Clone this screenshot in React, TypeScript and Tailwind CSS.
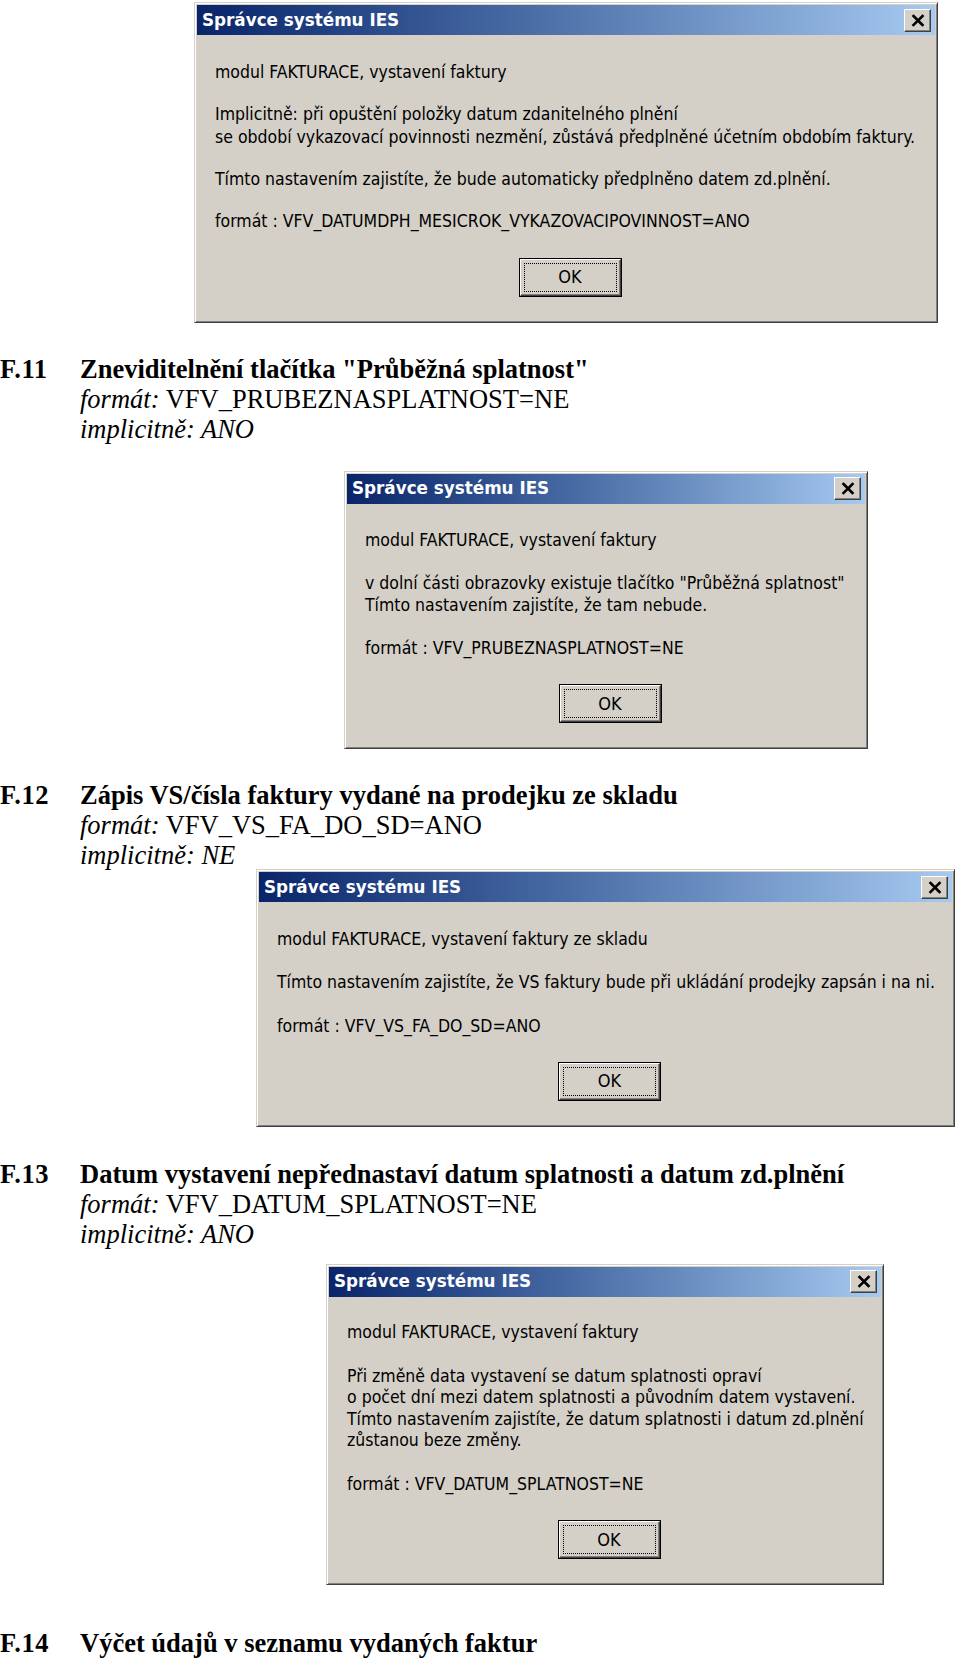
import React from "react";

type DialogProps = {
  className: string;
  textClass: string;
  paragraphs: string[][];
};

const TITLE = "Správce systému IES";

function CloseButton() {
  return (
    <div className="flex h-[23px] w-[27px] items-center justify-center border border-t-[#ffffff] border-l-[#ffffff] border-b-[#404040] border-r-[#404040] bg-[#d4d0c8] shadow-[inset_-1px_-1px_0_#808080]">
      <svg width="14" height="13" viewBox="0 0 14 13" aria-hidden="true">
        <path d="M2.5 2 L11.5 11 M11.5 2 L2.5 11" stroke="#000" strokeWidth="2.6" strokeLinecap="square" />
      </svg>
    </div>
  );
}

function OkButton() {
  return (
    <div className="mx-auto flex h-[39px] w-[103px] border border-black">
      <div className="flex flex-1 border border-t-[#ffffff] border-l-[#ffffff] border-b-[#404040] border-r-[#404040] bg-[#d4d0c8] p-[3px] shadow-[inset_-1px_-1px_0_#808080]">
        <div className="flex flex-1 items-center justify-center border border-dotted border-[#000]">
          <span className="font-['DejaVu_Sans_Condensed','DejaVu_Sans',sans-serif] text-[18px] leading-none text-black">OK</span>
        </div>
      </div>
    </div>
  );
}

function Dialog({ className, textClass, paragraphs }: DialogProps) {
  return (
    <div
      className={`border border-t-[#d4d0c8] border-l-[#d4d0c8] border-b-[#404040] border-r-[#404040] bg-[#d4d0c8] p-[2px] shadow-[inset_1px_1px_0_#ffffff,inset_-1px_-1px_0_#808080] ${className}`}
    >
      <div className="flex h-[30px] items-center justify-between bg-gradient-to-r from-[#0a246a] to-[#a6caf0] pl-[5px] pr-[4px]">
        <span className="font-['DejaVu_Sans',sans-serif] text-[16.8px] font-bold leading-none text-white">
          {TITLE}
        </span>
        <CloseButton />
      </div>
      <div className="flex flex-col pl-[18px] pr-[10px] pt-[25.5px] pb-[23px]">
        <div
          className={`flex flex-col font-['DejaVu_Sans_Condensed','DejaVu_Sans',sans-serif] text-[17.5px] text-black ${textClass}`}
        >
          {paragraphs.map((lines, i) => (
            <p key={i} className="whitespace-nowrap">
              {lines.map((line, j) => (
                <span key={j} className="block">
                  {line}
                </span>
              ))}
            </p>
          ))}
        </div>
        <div className="mt-[25px]">
          <OkButton />
        </div>
      </div>
    </div>
  );
}

function Heading({ num, title, format, implicit }: { num: string; title: string; format: string; implicit: string }) {
  return (
    <div className="grid grid-cols-[80px_1fr] font-['Liberation_Serif','Times_New_Roman',serif] text-[26.5px] leading-[30px] text-black">
      <div className="font-bold tracking-[0.5px]">{num}</div>
      <div className="flex flex-col">
        <div className="font-bold">{title}</div>
        {format && (
          <div>
            <i>formát:</i> {format}
          </div>
        )}
        {implicit && <div className="italic">implicitně: {implicit}</div>}
      </div>
    </div>
  );
}

export default function App() {
  return (
    <div className="flex min-h-[1661px] w-[960px] flex-col bg-white pt-[2px]">
      <Dialog
        className="ml-[194px] w-[744px]"
        textClass="gap-[19px] leading-[23px]"
        paragraphs={[
          ["modul FAKTURACE, vystavení faktury"],
          [
            "Implicitně: při opuštění položky datum zdanitelného plnění",
            "se období vykazovací povinnosti nezmění, zůstává předplněné účetním obdobím faktury.",
          ],
          ["Tímto nastavením zajistíte, že bude automaticky předplněno datem zd.plnění."],
          ["formát : VFV_DATUMDPH_MESICROK_VYKAZOVACIPOVINNOST=ANO"],
        ]}
      />

      <div className="mt-[31px]">
        <Heading
          num="F.11"
          title={'Zneviditelnění tlačítka "Průběžná splatnost"'}
          format="VFV_PRUBEZNASPLATNOST=NE"
          implicit="ANO"
        />
      </div>

      <Dialog
        className="ml-[344px] mt-[27px] w-[524px]"
        textClass="gap-[21px] leading-[22px]"
        paragraphs={[
          ["modul FAKTURACE, vystavení faktury"],
          [
            'v dolní části obrazovky existuje tlačítko "Průběžná splatnost"',
            "Tímto nastavením zajistíte, že tam nebude.",
          ],
          ["formát : VFV_PRUBEZNASPLATNOST=NE"],
        ]}
      />

      <div className="mt-[31px]">
        <Heading
          num="F.12"
          title="Zápis VS/čísla faktury vydané na prodejku ze skladu"
          format="VFV_VS_FA_DO_SD=ANO"
          implicit="NE"
        />
      </div>

      <Dialog
        className="ml-[256px] -mt-[1px] w-[699px]"
        textClass="gap-[21.5px] leading-[22px]"
        paragraphs={[
          ["modul FAKTURACE, vystavení faktury ze skladu"],
          ["Tímto nastavením zajistíte, že VS faktury bude při ukládání prodejky zapsán i na ni."],
          ["formát : VFV_VS_FA_DO_SD=ANO"],
        ]}
      />

      <div className="mt-[32px]">
        <Heading
          num="F.13"
          title="Datum vystavení nepřednastaví datum splatnosti a datum zd.plnění"
          format="VFV_DATUM_SPLATNOST=NE"
          implicit="ANO"
        />
      </div>

      <Dialog
        className="ml-[326px] mt-[15px] w-[558px]"
        textClass="gap-[22px] leading-[21.5px]"
        paragraphs={[
          ["modul FAKTURACE, vystavení faktury"],
          [
            "Při změně data vystavení se datum splatnosti opraví",
            "o počet dní mezi datem splatnosti a původním datem vystavení.",
            "Tímto nastavením zajistíte, že datum splatnosti i datum zd.plnění",
            "zůstanou beze změny.",
          ],
          ["formát : VFV_DATUM_SPLATNOST=NE"],
        ]}
      />

      <div className="mt-[43px]">
        <Heading num="F.14" title="Výčet údajů v seznamu vydaných faktur" format="" implicit="" />
      </div>
    </div>
  );
}
